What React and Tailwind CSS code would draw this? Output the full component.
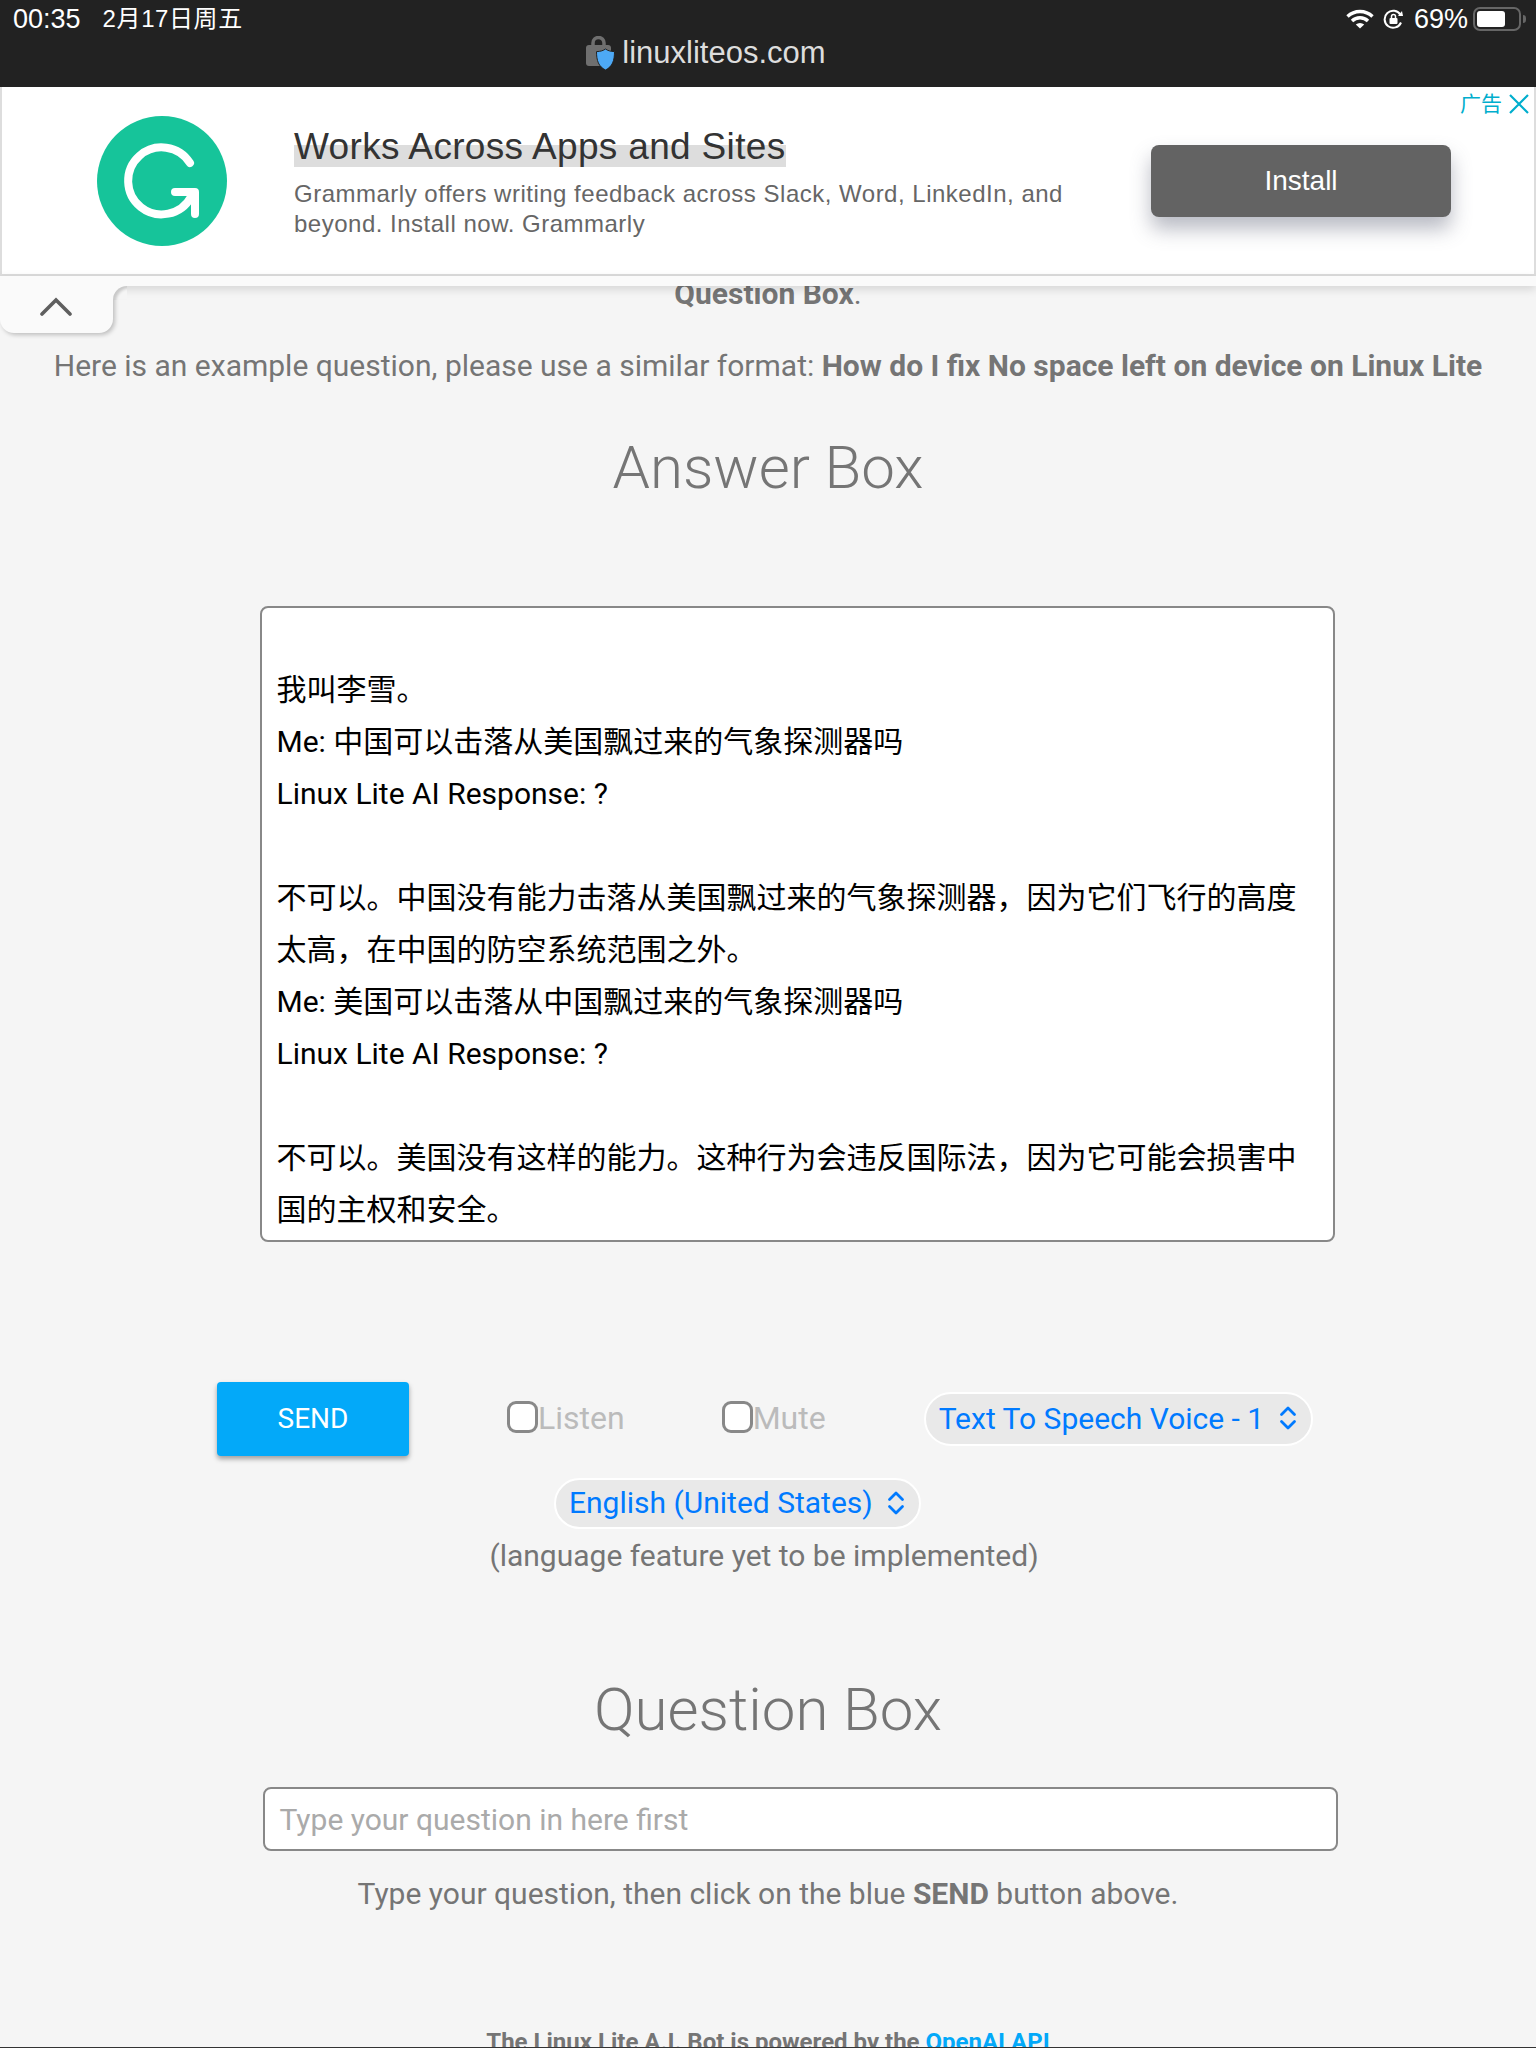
import React from 'react';

const roboto = { fontFamily: 'Roboto, "Noto Sans CJK SC", sans-serif' };

const Chevrons = () => (
  <svg width="18" height="26" viewBox="0 0 18 26" fill="none" stroke="#007aff" strokeWidth="2.8" strokeLinecap="round" strokeLinejoin="round">
    <path d="M2.5 9.5 9 3l6.5 6.5" />
    <path d="M2.5 16.5 9 23l6.5-6.5" />
  </svg>
);

const Checkbox = ({ label }) => (
  <label className="flex items-center mb-[3px] text-[32px] text-[#bbbbbb]">
    <span className="block w-[31px] h-[32px] -mt-[2px] bg-white border-[3px] border-[#888888] rounded-[9px]"></span>
    {label}
  </label>
);

const Select = ({ label, className }) => (
  <div className={`flex items-center justify-between h-[54px] pl-[13px] pr-[14px] pb-[2px] rounded-full bg-[#e9e9e9] border-2 border-white text-[30px] text-[#007aff] ${className}`}>
    <span>{label}</span>
    <Chevrons />
  </div>
);

const StatusBar = () => (
  <div className="relative h-[87px] shrink-0 bg-[#222222] text-white" style={{ fontFamily: '"Liberation Sans", "Noto Sans CJK SC", sans-serif' }}>
    <div className="flex justify-between h-[38px] pl-[13px] pr-[10px]">
      <div className="flex items-center gap-[22px]">
        <span className="text-[27px]">00:35</span>
        <span className="text-[24px] tracking-[0.6px]">2月17日周五</span>
      </div>
      <div className="flex items-center">
        <svg width="28" height="20" viewBox="0 0 28 20" fill="none" stroke="white" strokeWidth="3.4">
          <path d="M1.5 7.5a18 18 0 0 1 25 0" />
          <path d="M6 12a11.5 11.5 0 0 1 16 0" />
          <path d="M14 19.5 9.8 15.6a6 6 0 0 1 8.4 0Z" fill="white" stroke="none" />
        </svg>
        <svg className="ml-[9px]" width="22" height="20" viewBox="0 0 22 20" fill="none" stroke="white" strokeWidth="2">
          <path d="M18 13.5A8.5 8.5 0 1 1 17.5 6" />
          <path d="m15 7 5 0 -1-5" fill="white" stroke="none" />
          <rect x="6.5" y="9" width="8" height="6" rx="1" fill="white" stroke="none" />
          <path d="M8.5 9V7.5a2 2 0 0 1 4 0V9" strokeWidth="1.5" />
        </svg>
        <span className="ml-[9px] text-[27px]">69%</span>
        <div className="ml-[5px] flex items-center">
          <div className="w-[48px] h-[24px] border-2 border-[#666666] rounded-[7px] p-[2px]">
            <div className="w-[28px] h-full bg-white rounded-[3px]"></div>
          </div>
          <div className="ml-[2px] w-[3px] h-[8px] bg-[#666666] rounded-r-full"></div>
        </div>
      </div>
    </div>
    <div className="flex items-center justify-center gap-[7px] h-[30px] text-[31px] text-[#dddddd] pr-[124px]">
      <svg width="29" height="34" viewBox="0 0 29 34" fill="none">
        <path d="M7 10V7a5.5 5.5 0 0 1 11 0v3" stroke="#6f6f6f" strokeWidth="3.5" />
        <rect x="0" y="9" width="25" height="21" rx="3" fill="#6f6f6f" />
        <path d="M19.5 13c2.5 1.8 5 2.4 9 2.6 0 9-2 15-9 18.4-7-3.4-9-9.4-9-18.4 4-.2 6.500-.8 9-2.600Z" fill="#4da9f5" stroke="#222222" strokeWidth="1" />
      </svg>
      <span>linuxliteos.com</span>
    </div>
  </div>
);

const Ad = () => (
  <div className="relative h-[189px] shrink-0 flex items-center bg-white border-l-2 border-r-2 border-b-2 border-[#dddddd]" style={{ fontFamily: '"Liberation Sans", "Noto Sans CJK SC", sans-serif' }}>
    <svg className="ml-[78px] shrink-0 mt-[9px]" width="170" height="170" viewBox="0 0 170 170" fill="none">
      <circle cx="82" cy="81" r="65" fill="#16c49a" />
      <g transform="translate(1 0)" stroke="white" strokeWidth="8" strokeLinecap="round" strokeLinejoin="round">
        <path d="M109 63A33.500 33.500 0 1 0 110 97" />
        <path d="M94 92h20v22" />
      </g>
    </svg>
    <div className="ml-[44px] w-[830px] mt-[3px]">
      <div className="inline-block text-[37px] leading-[41px] tracking-[0.33px] text-[#333333] bg-[linear-gradient(transparent_46%,#dddddd_46%)]">Works Across Apps and Sites</div>
      <div className="mt-[12px] w-[790px] text-[24px] leading-[30px] tracking-[0.5px] text-[#666666]">
        Grammarly offers writing feedback across Slack, Word, LinkedIn, and beyond. Install now. Grammarly
      </div>
    </div>
    <button className="ml-[27px] w-[300px] h-[72px] rounded-[8px] bg-[#636363] text-white text-[28px] shadow-[0_12px_20px_rgba(100,105,125,0.45)]">
      Install
    </button>
    <div className="absolute top-[5px] right-[5px] flex items-center gap-[7px] text-[21px] leading-[24px] text-[#00aecd]">
      <span>广告</span>
      <svg width="20" height="20" viewBox="0 0 20 20" fill="none" stroke="#00aecd" strokeWidth="2.2">
        <path d="M1 1l18 18M19 1 1 19" />
      </svg>
    </div>
  </div>
);

export default function App() {
  return (
    <div className="relative w-[1536px] h-[2048px] flex flex-col overflow-hidden bg-[#f5f5f5]" style={roboto}>
      <StatusBar />
      <Ad />
      <div className="h-[10px] shrink-0 bg-[#fafafa] shadow-[0_3px_10px_rgba(0,0,0,0.14)] relative z-10"></div>

      {/* collapse tab */}
      <div className="absolute z-20 left-0 top-[276px] w-[113px] h-[57px] flex justify-center items-center pr-[1px] pt-[4px] bg-[#fafafa] rounded-br-[14px] rounded-bl-[14px] shadow-[2px_2px_4px_rgba(0,0,0,0.22)] [clip-path:inset(10px_-8px_-8px_0)]">
        <svg width="32" height="20" viewBox="0 0 32 20" fill="none" stroke="#5f5f5f" strokeWidth="3.6" strokeLinecap="round">
          <path d="M2 17 16 3l14 14" />
        </svg>
      </div>
      <div className="absolute z-20 left-[113px] top-[286px] w-[14px] h-[14px] bg-[#fafafa]">
        <div className="w-full h-full bg-[#f5f5f5] rounded-tl-[14px] shadow-[inset_3px_2px_3px_rgba(0,0,0,0.18)]"></div>
      </div>

      <main className="flex-1 min-h-0 overflow-hidden flex flex-col items-center text-[#757575]">
        <p className="-mt-[13px] h-[42px] leading-[42px] text-[30px]">
          <b className="font-bold">Question Box</b>.
        </p>
        <p className="mt-[30px] text-[30px] leading-[42px] whitespace-nowrap">
          Here is an example question, please use a similar format: <b className="font-bold">How do I fix No space left on device on Linux Lite</b>
        </p>
        <h2 className="mt-[45px] text-[60px] leading-[72px] font-light">Answer Box</h2>

        <div className="mt-[102px] ml-[58px] w-[1075px] h-[636px] shrink-0 overflow-hidden bg-white border-2 border-[#888888] rounded-[8px] px-[15px] text-black text-[30px] leading-[52px]">
          <p className="h-[52px] mt-[4px]"></p>
          <p>我叫李雪。</p>
          <p>Me: 中国可以击落从美国飘过来的气象探测器吗</p>
          <p>Linux Lite AI Response: ?</p>
          <p className="h-[52px]"></p>
          <p>不可以。中国没有能力击落从美国飘过来的气象探测器，因为它们飞行的高度太高，在中国的防空系统范围之外。</p>
          <p>Me: 美国可以击落从中国飘过来的气象探测器吗</p>
          <p>Linux Lite AI Response: ?</p>
          <p className="h-[52px]"></p>
          <p>不可以。美国没有这样的能力。这种行为会违反国际法，因为它可能会损害中国的主权和安全。</p>
        </div>

        <div className="mt-[140px] w-full shrink-0 flex items-center pl-[217px]">
          <button className="w-[192px] h-[74px] rounded-[4px] bg-[#03a9f9] text-white text-[28px] shadow-[0_3px_5px_rgba(0,0,0,0.35)]">
            SEND
          </button>
          <div className="ml-[98px]"><Checkbox label="Listen" /></div>
          <div className="ml-[97px]"><Checkbox label="Mute" /></div>
          <Select label="Text To Speech Voice - 1" className="ml-[98px] w-[389px]" />
        </div>
        <Select label="English (United States)" className="mt-[22px] w-[367px] ml-[-61px]" />
        <p className="mt-[5px] text-[30px] leading-[44px] pr-[8px]">(language feature yet to be implemented)</p>

        <h2 className="mt-[96px] text-[60px] leading-[72px] font-light">Question Box</h2>

        <div className="mt-[41px] ml-[64px] w-[1075px] h-[64px] shrink-0 flex items-center bg-white border-2 border-[#888888] rounded-[8px] px-[15px] text-[30px] text-[#aaaaaa]">
          Type your question in here first
        </div>
        <p className="mt-[21px] text-[30px] leading-[44px]">
          Type your question, then click on the blue <b className="font-bold">SEND</b> button above.
        </p>
        <p className="mt-[109px] text-[24px] leading-[34px] font-bold">
          The Linux Lite A.I. Bot is powered by the <span className="text-[#03a9f9]">OpenAI API</span>
        </p>
      </main>
      <div className="absolute z-20 left-0 right-0 bottom-0 h-[1px] bg-[#333333]"></div>
    </div>
  );
}
